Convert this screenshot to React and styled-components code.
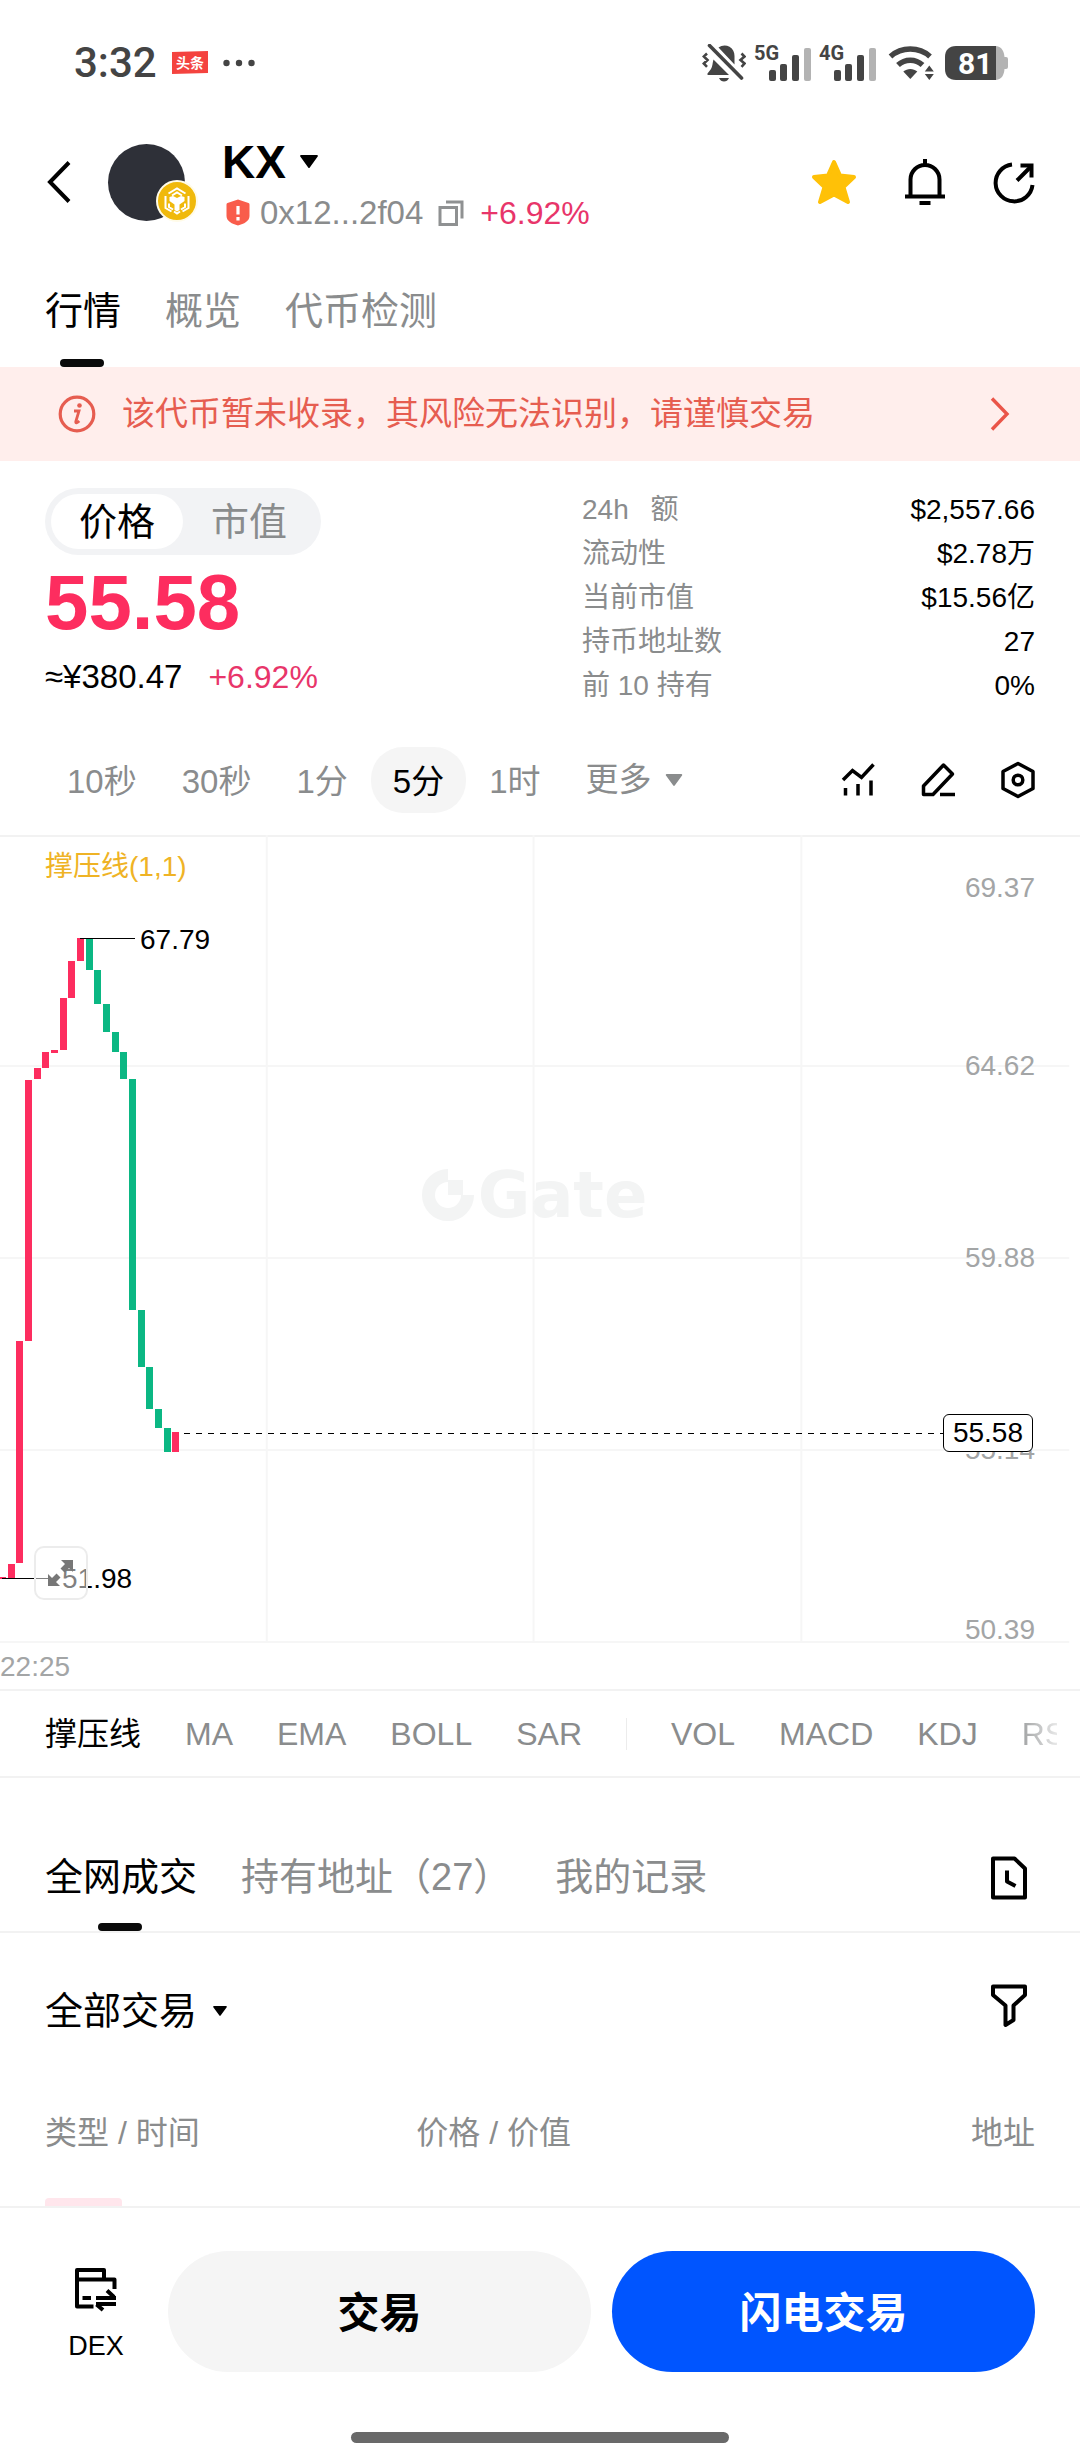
import { useState } from 'react';
import styled, { createGlobalStyle } from 'styled-components';

const RED = '#fd2d5f';
const GREEN = '#0bb783';

const timeframes = ['10秒', '30秒', '1分', '5分', '1时'];
const mainIndicators = ['撑压线', 'MA', 'EMA', 'BOLL', 'SAR'];
const subIndicators = ['VOL', 'MACD', 'KDJ', 'RSI'];

const stats = [
    { label: '24h \u2002额', value: '$2,557.66' },
    { label: '流动性', value: '$2.78万' },
    { label: '当前市值', value: '$15.56亿' },
    { label: '持币地址数', value: '27' },
    { label: '前 10 持有', value: '0%' },
];

// [top, bottom, rising], in chart pixels, oldest first
const candles = [
    [742, 744, true],
    [729, 743, true],
    [506, 728, true],
    [245, 506, true],
    [233, 244, true],
    [217, 233, true],
    [215, 218, true],
    [163, 215, true],
    [126, 163, true],
    [103, 126, true],
    [103, 135, false],
    [135, 169, false],
    [169, 197, false],
    [197, 217, false],
    [217, 244, false],
    [244, 475, false],
    [475, 532, false],
    [532, 574, false],
    [574, 593, false],
    [593, 617, false],
    [597, 617, true],
];

const priceScale = [
    { text: '69.37', y: 62 },
    { text: '64.62', y: 240 },
    { text: '59.88', y: 432 },
    { text: '55.14', y: 624 },
    { text: '50.39', y: 804 },
];

const Caret = ({ width, height, color = '#000' }) => (
    <svg width={width} height={height} viewBox="0 0 18 13" fill={color} aria-hidden="true">
        <path d="M1 0h16a1 1 0 0 1 .7 1.600L9.800 12.400a1 1 0 0 1-1.600 0L.3 1.600A1 1 0 0 1 1 0z" />
    </svg>
);

const Signal = ({ type }) => (
    <svg width="57" height="38" viewBox="0 0 57 38" fill="#444">
        <text x="0" y="16" fontFamily="Roboto" fontWeight="700" fontSize="20">{type}</text>
        <rect x="15" y="26" width="7" height="11" rx="2" />
        <rect x="26" y="20" width="7" height="17" rx="2" />
        <rect x="38" y="11" width="7" height="26" rx="2" />
        <rect x="50" y="4" width="7" height="33" rx="2" fill="#b3b3b3" />
    </svg>
);

function StatusBar() {
    return (
        <Status>
            <StatusLeft>
                <Clock>3:32</Clock>
                <svg width="36" height="26" viewBox="0 0 36 26">
                    <path d="M0 2l36-1v22L0 24z" fill="#f4433f" />
                    <text x="4" y="18" fill="#fff" fontFamily="Noto Sans CJK SC" fontWeight="700" fontSize="14">头条</text>
                </svg>
                <svg width="32" height="8" viewBox="0 0 32 8" fill="#444">
                    <circle cx="3.500" cy="4" r="3.200" />
                    <circle cx="16" cy="4" r="3.200" />
                    <circle cx="28.500" cy="4" r="3.200" />
                </svg>
            </StatusLeft>
            <StatusRight>
                <svg width="44" height="38" viewBox="0 0 44 38" fill="#444">
                    <path d="M11.500 15.500L27 31H6.500c-1 0-1.500-1-.8-1.800L9 25c1.500-2.500 1.500-6 2.500-9.500zM16.500 3.500C20 1 24 .8 27.500 2.800 31 5 32.500 8 32.500 12v8.500z" />
                    <path d="M7.500 1.500l32 32.500" stroke="#444" strokeWidth="3.600" strokeLinecap="round" />
                    <path d="M17 34h10c-1 2.500-3 3.500-5 3.500S18 36.500 17 34z" />
                    <path d="M5 9.500L1.800 12.500 5.500 16 1.800 19.500 5 22.800M39.500 9.500L42.500 12.500 38.500 16 42.500 19.500 39.500 22.800" fill="none" stroke="#444" strokeWidth="2.600" />
                </svg>
                <Signal type="5G" />
                <Signal type="4G" />
                <svg width="53" height="36" viewBox="-4 0 53 36" fill="#444">
                    <path d="M2.500 11.500C13.500 1.600 31 1.600 42 11.500" fill="none" stroke="#444" strokeWidth="5.500" />
                    <path d="M10 20c7-6.500 17.500-6.500 24.500 0" fill="none" stroke="#444" strokeWidth="5.500" />
                    <path d="M22.300 34l-7-7.500c4-3.500 10-3.500 14 0z" />
                    <path d="M41.300 20.500l4.500 6h-9zM41.300 35l4.500-6h-9z" />
                </svg>
                <svg width="64" height="34" viewBox="0 0 64 34">
                    <path d="M51 0c6 1 8 5 8.500 11H61a2 2 0 0 1 2 2v8a2 2 0 0 1-2 2h-1.500C59 29 57 33 51 34z" fill="#b3b3b3" />
                    <path d="M11 0h40v34H11C4 34 0 30 0 23V11C0 4 4 0 11 0z" fill="#444" />
                    <text x="13" y="28" fill="#fff" fontFamily="Roboto" fontWeight="700" fontSize="30">81</text>
                </svg>
            </StatusRight>
        </Status>
    );
}

function TokenHeader() {
    return (
        <Header>
            <IconButton aria-label="返回">
                <svg width="24" height="42" viewBox="0 0 24 42" fill="none" stroke="#000" strokeWidth="4">
                    <path d="M22 1.500L3 21l19 19.500" />
                </svg>
            </IconButton>
            <Avatar>
                <ChainBadge>
                    <svg width="42" height="42" viewBox="0 0 42 42" fill="none">
                        <circle cx="21" cy="21" r="20" fill="#f0b90b" stroke="#fffbe8" strokeWidth="2" />
                        <g stroke="#fff" strokeWidth="2">
                            <path d="M12.500 13.500L21 8.500l8.500 5" />
                            <path d="M16 15.500l5-3 5 3" />
                            <path d="M9.500 16v12l6 3.500M32.500 16v12l-6 3.500" />
                            <path d="M13 23.500v3.500l4 2.500M29 23.500v3.500l-4 2.500" />
                            <path d="M18 31.500l3 2 3-2" />
                            <path d="M13.500 17l3.500-1 4 2 4-2 3.500 1v4l-5 3.500V30L21 31.500 18.500 30v-5.500l-5-3.500z" fill="#fff" stroke="none" />
                        </g>
                    </svg>
                </ChainBadge>
            </Avatar>
            <TokenInfo>
                <TokenName aria-haspopup="menu">
                    KX
                    <Caret width={18} height={13} />
                </TokenName>
                <AddressLine>
                    <svg width="24" height="27" viewBox="0 0 24 27">
                        <path d="M12 .5l10.500 3.500c.6.200 1 .7 1 1.400V17c0 5-5.500 8-11.500 9.500C6 25 .5 22 .5 17V5.400c0-.7.4-1.200 1-1.400z" fill="#f95c4b" />
                        <path d="M12 7v8.500M12 18v3.500" stroke="#fff" strokeWidth="3.200" />
                    </svg>
                    <Address>0x12...2f04</Address>
                    <CopyButton aria-label="复制地址">
                        <svg width="26" height="26" viewBox="0 0 26 26" fill="none" stroke="#8f9192" strokeWidth="3">
                            <path d="M2 7.500h16.500v17H2zM8 2h16v16.500" />
                        </svg>
                    </CopyButton>
                    <Change>+6.92%</Change>
                </AddressLine>
            </TokenInfo>
            <HeaderActions>
                <IconButton aria-label="收藏">
                    <svg width="46" height="46" viewBox="0 0 46 46">
                        <path d="M23 3l6 13.500 14 1.500-10.500 10 4.500 15-14-7.500-14 7.500 4.500-15L3 18l14-1.500z" fill="#ffc107" stroke="#ffc107" strokeWidth="4" strokeLinejoin="round" />
                    </svg>
                </IconButton>
                <IconButton aria-label="价格提醒">
                    <svg width="40" height="46" viewBox="0 0 40 46" fill="none" stroke="#000" strokeWidth="4">
                        <path d="M20 0v6M5.500 37V20.500a14.500 14.500 0 0 1 29 0V37M0 37.500h40M14.500 44h11" />
                    </svg>
                </IconButton>
                <IconButton aria-label="分享">
                    <svg width="42" height="46" viewBox="0 0 42 46" fill="none" stroke="#000" strokeWidth="4">
                        <path d="M19 5.500A18.500 18.500 0 1 0 39.500 26M24 21.500L38 7.500" />
                        <path d="M27.500 6.500H38.500V18.500" />
                    </svg>
                </IconButton>
            </HeaderActions>
        </Header>
    );
}

function PriceChart() {
    return (
        <ChartBox>
            <ChartSvg>
                {['24.7%', '49.4%', '74.2%'].map(x => (
                    <line key={x} x1={x} x2={x} y1="0" y2="807" stroke="#f6f6f6" strokeWidth="2" />
                ))}
                {[231, 423, 615, 807].map(y => (
                    <line key={y} x1="0" x2="99%" y1={y} y2={y} stroke="#f6f6f6" strokeWidth="2" />
                ))}
                {candles.map(([top, bottom, up], i) => (
                    <rect
                        key={i}
                        x={Math.round(i * 8.667 - 1)}
                        y={top}
                        width="7"
                        height={bottom - top}
                        fill={up ? RED : GREEN}
                    />
                ))}
                <path d="M80 103.500h55M2 743.500h55" stroke="#000" />
                <ChartText x="140" y="114">67.79</ChartText>
                <ChartText x="62" y="753">51.98</ChartText>
                <ChartText x="45" y="41" $color="#efb325">撑压线(1,1)</ChartText>
                <svg x="100%" overflow="visible">
                    {priceScale.map(p => (
                        <ChartText key={p.text} x="-45" y={p.y} textAnchor="end" $color="#a3a5a6">{p.text}</ChartText>
                    ))}
                </svg>
            </ChartSvg>
            <Watermark>
                <svg width="54" height="52" viewBox="0 0 54 52">
                    <path d="M27 6.500A19.500 19.500 0 1 0 46.500 26" fill="none" stroke="#f3f4f4" strokeWidth="13" />
                    <path d="M27 11h15v15H27z" fill="#f3f4f4" />
                </svg>
                Gate
            </Watermark>
            <LastPrice>
                <DashedRule />
                <PriceTag>55.58</PriceTag>
            </LastPrice>
            <ExpandButton aria-label="全屏">
                <svg width="28" height="28" viewBox="0 0 28 28" fill="#777">
                    <path d="M14 1h12v12l-4-4-4.500 4.500-4-4L18 5zM1 27V15l4 4 4.500-4.500 4 4L9 23l4 4z" />
                </svg>
            </ExpandButton>
        </ChartBox>
    );
}

export default function App() {
    const [tab, setTab] = useState('行情');
    const [mode, setMode] = useState('价格');
    const [frame, setFrame] = useState('5分');
    const [indicator, setIndicator] = useState('撑压线');
    const [list, setList] = useState('全网成交');

    return (
        <Page>
            <GlobalStyle />
            <StatusBar />
            <TokenHeader />

            <Tabs>
                {['行情', '概览', '代币检测'].map(t => (
                    <Tab key={t} $active={t === tab} onClick={() => setTab(t)}>{t}</Tab>
                ))}
            </Tabs>

            <RiskBanner href="#risk">
                <svg width="38" height="38" viewBox="0 0 38 38" fill="none" stroke="#e65d50">
                    <circle cx="19" cy="19" r="16.800" strokeWidth="3.200" />
                    <path d="M16 16h5l-3.200 10.500c-.3 1.800 1 1.800 3.500-.5" strokeWidth="2.800" />
                    <circle cx="21.500" cy="10.500" r="2.300" fill="#e65d50" stroke="none" />
                </svg>
                <RiskText>该代币暂未收录，其风险无法识别，请谨慎交易</RiskText>
                <svg width="20" height="34" viewBox="0 0 20 34" fill="none" stroke="#ea5549" strokeWidth="3.400">
                    <path d="M2 1.500L17 17 2 32.500" />
                </svg>
            </RiskBanner>

            <Summary>
                <div>
                    <Toggle>
                        {['价格', '市值'].map(m => (
                            <ToggleButton key={m} $active={m === mode} onClick={() => setMode(m)}>{m}</ToggleButton>
                        ))}
                    </Toggle>
                    <Price>55.58</Price>
                    <SubPrice>
                        ≈¥380.47
                        <Change>+6.92%</Change>
                    </SubPrice>
                </div>
                <Stats>
                    {stats.map(s => (
                        <StatRow key={s.label}>
                            <dt>{s.label}</dt>
                            <dd>{s.value}</dd>
                        </StatRow>
                    ))}
                </Stats>
            </Summary>

            <Toolbar>
                {timeframes.map(f => (
                    <Frame key={f} $active={f === frame} onClick={() => setFrame(f)}>{f}</Frame>
                ))}
                <MoreFrames>
                    <PlainSelect aria-label="更多周期" $size={33} $color="#8a8c8d">
                        <option>更多</option>
                    </PlainSelect>
                    <Caret width={18} height={12} color="#8a8c8d" />
                </MoreFrames>
                <ToolIcons>
                    <IconButton aria-label="指标">
                        <svg width="34" height="36" viewBox="0 0 34 36" fill="none" stroke="#000" strokeWidth="3.500">
                            <path d="M2 18l9.500-9.500 9 7L32.500 2.500M4.500 26v7.500M17 22v11.500M30 18.500v15" />
                        </svg>
                    </IconButton>
                    <IconButton aria-label="画线">
                        <svg width="34" height="36" viewBox="0 0 34 36" fill="none" stroke="#000" strokeWidth="3.500" strokeLinejoin="round">
                            <path d="M2.500 32.500V24L22.500 3l9 9-19.500 20.500zM19 32.500h15" />
                        </svg>
                    </IconButton>
                    <IconButton aria-label="设置">
                        <svg width="34" height="38" viewBox="0 0 34 38" fill="none" stroke="#000" strokeWidth="3.500" strokeLinejoin="round">
                            <path d="M17 2.500l15 8v17l-15 8-15-8v-17z" />
                            <circle cx="17" cy="19" r="4.800" />
                        </svg>
                    </IconButton>
                </ToolIcons>
            </Toolbar>

            <PriceChart />
            <TimeAxis>22:25</TimeAxis>

            <Indicators>
                {mainIndicators.map(n => (
                    <Indicator key={n} $active={n === indicator} onClick={() => setIndicator(n)}>{n}</Indicator>
                ))}
                <Divider />
                {subIndicators.map(n => (
                    <Indicator key={n}>{n}</Indicator>
                ))}
            </Indicators>

            <ListTabs>
                {['全网成交', '持有地址（27）', '我的记录'].map(t => (
                    <Tab key={t} $active={t === list} onClick={() => setList(t)}>{t}</Tab>
                ))}
                <TabIcon aria-label="历史记录">
                    <svg width="38" height="44" viewBox="0 0 38 44" fill="none" stroke="#000" strokeWidth="4" strokeLinejoin="round">
                        <path d="M3 2.500h21.500L35 12.500v29H3z" />
                        <path d="M17 14.500v11l8.500 4.500" />
                    </svg>
                </TabIcon>
            </ListTabs>

            <FilterRow>
                <FilterLabel>
                    <PlainSelect aria-label="交易类型" $size={38} $color="#000">
                        <option>全部交易</option>
                    </PlainSelect>
                    <Caret width={14} height={10} />
                </FilterLabel>
                <RightIcon aria-label="筛选">
                    <svg width="38" height="44" viewBox="0 0 38 44" fill="none" stroke="#000" strokeWidth="4" strokeLinejoin="round">
                        <path d="M3 2.500h32v8.500L23.500 21.500V36L15.500 41V21.500L3 11z" />
                    </svg>
                </RightIcon>
            </FilterRow>

            <TradesClip>
                <Trades>
                    <thead>
                        <tr>
                            <Th $width="37.5%">类型 / 时间</Th>
                            <Th>价格 / 价值</Th>
                            <Th $align="right">地址</Th>
                        </tr>
                    </thead>
                    <tbody>
                        <tr>
                            <Td><TypeTag /></Td>
                            <Td />
                            <Td />
                        </tr>
                    </tbody>
                </Trades>
            </TradesClip>

            <BottomBar>
                <DexLink href="#dex">
                    <svg width="42" height="44" viewBox="0 0 42 44" fill="none" stroke="#000" strokeWidth="4" strokeLinejoin="round">
                        <path d="M18.500 38.500H2V2h27v9.500M2 11.500h37.500v9.500M7.500 30H16" />
                        <path d="M21 30h20M32 22.500l7 6.500M41 36H21M21.500 36.500l6.500 5.500" />
                    </svg>
                    DEX
                </DexLink>
                <ActionButton>交易</ActionButton>
                <ActionButton $primary>闪电交易</ActionButton>
            </BottomBar>
            <HomeBar />
        </Page>
    );
}

const GlobalStyle = createGlobalStyle`
    * {
        box-sizing: border-box;
    }
    body {
        margin: 0;
        background: #fff;
    }
    button, select {
        margin: 0;
        padding: 0;
        border: 0;
        background: none;
        font: inherit;
        color: inherit;
        cursor: pointer;
    }
    svg {
        display: block;
        flex-shrink: 0;
    }
`;

const Page = styled.div`
    font-family: 'Liberation Sans', 'Noto Sans CJK SC', sans-serif;
    color: #000;
    background: #fff;
    overflow: hidden;
`;

const Status = styled.div`
    display: flex;
    justify-content: space-between;
    align-items: center;
    height: 126px;
    padding: 0 71px 0 74px;
`;

const StatusLeft = styled.div`
    display: flex;
    align-items: center;
    gap: 15px;
`;

const Clock = styled.span`
    font-family: Roboto, sans-serif;
    font-size: 42px;
    font-weight: 500;
    line-height: 50px;
    color: #444;
`;

const StatusRight = styled.div`
    display: flex;
    align-items: center;
    gap: 8px;
`;

const Header = styled.header`
    display: flex;
    align-items: center;
    height: 112px;
    padding: 0 45px 0 47px;
`;

const IconButton = styled.button`
    display: flex;
    align-items: center;
    justify-content: center;
`;

const Avatar = styled.div`
    position: relative;
    width: 77px;
    height: 77px;
    margin-left: 37px;
    border-radius: 50%;
    background: #2e3038;
`;

const ChainBadge = styled.span`
    position: absolute;
    right: -13px;
    bottom: -1px;
`;

const TokenInfo = styled.div`
    padding-top: 9px;
    margin-left: 37px;
`;

const TokenName = styled.button`
    display: flex;
    align-items: center;
    gap: 14px;
    font-size: 46px;
    font-weight: 700;
    line-height: 52px;
`;

const AddressLine = styled.div`
    display: flex;
    align-items: center;
    font-size: 33px;
    line-height: 50px;
    margin-left: 4px;
`;

const Address = styled.span`
    margin-left: 10px;
    color: #8a8c8d;
`;

const CopyButton = styled.button`
    margin: 0 16px 0 15px;
`;

const Change = styled.span`
    font-size: 32px;
    color: #e8356a;
`;

const HeaderActions = styled.div`
    display: flex;
    align-items: center;
    gap: 48px;
    margin-left: auto;
`;

const Tabs = styled.nav`
    display: flex;
    align-items: stretch;
    gap: 44px;
    height: 129px;
    padding: 0 45px;
`;

const ListTabs = styled(Tabs)`
    height: 155px;
    padding-top: 28px;
    border-bottom: 2px solid #f2f2f2;
`;

const Tab = styled.button`
    position: relative;
    padding-top: 16px;
    font-size: 38px;
    line-height: 50px;
    white-space: nowrap;
    color: ${p => (p.$active ? '#000' : '#8a8c8d')};

    &::after {
        content: '';
        display: ${p => (p.$active ? 'block' : 'none')};
        position: absolute;
        bottom: 0;
        left: calc(50% - 23px);
        width: 44px;
        height: 8px;
        border-radius: 4px;
        background: #0a0a0a;
    }
`;

const RiskBanner = styled.a`
    display: flex;
    align-items: center;
    height: 94px;
    padding: 0 70px 0 58px;
    background: #ffeeec;
    color: #e65d50;
    text-decoration: none;
`;

const RiskText = styled.span`
    flex: 1;
    margin-left: 26px;
    font-size: 33px;
    line-height: 50px;
`;

const Summary = styled.section`
    display: grid;
    grid-template-columns: 537fr 453fr;
    padding: 27px 45px 0;
`;

const Toggle = styled.div`
    display: inline-flex;
    height: 67px;
    padding: 6px;
    border-radius: 34px;
    background: #f2f3f5;
    vertical-align: top;
`;

const ToggleButton = styled.button`
    padding: 0 28px;
    border-radius: 28px;
    font-size: 38px;
    line-height: 54px;
    background: ${p => (p.$active ? '#fff' : 'transparent')};
    color: ${p => (p.$active ? '#000' : '#8a8c8d')};
`;

const Price = styled.div`
    font-size: 78px;
    font-weight: 700;
    line-height: 94px;
    color: ${RED};
`;

const SubPrice = styled.div`
    display: flex;
    gap: 26px;
    font-size: 33px;
    line-height: 56px;
`;

const Stats = styled.dl`
    margin: 0;
    font-size: 28px;
    line-height: 44px;
`;

const StatRow = styled.div`
    display: flex;
    justify-content: space-between;

    dt {
        color: #8a8c8d;
    }
    dd {
        margin: 0;
    }
`;

const Toolbar = styled.div`
    display: flex;
    align-items: center;
    gap: 1px;
    padding: 39px 45px 22px;
`;

const Frame = styled.button`
    height: 66px;
    padding: 0 22px 3px;
    border-radius: 32px;
    font-size: 33px;
    white-space: nowrap;
    background: ${p => (p.$active ? '#f5f5f5' : 'transparent')};
    color: ${p => (p.$active ? '#000' : '#8a8c8d')};
`;

const MoreFrames = styled.label`
    display: flex;
    align-items: center;
    gap: 13px;
    padding-left: 22px;
`;

const PlainSelect = styled.select`
    appearance: none;
    font-size: ${p => p.$size}px;
    line-height: 50px;
    color: ${p => p.$color};
`;

const ToolIcons = styled.div`
    display: flex;
    align-items: center;
    gap: 46px;
    margin-left: auto;
`;

const ChartBox = styled.section`
    position: relative;
    height: 808px;
    border-top: 2px solid #f2f2f2;
`;

const ChartSvg = styled.svg`
    width: 100%;
    height: 808px;
    margin-top: -2px;
`;

const ChartText = styled.text`
    font-size: 28px;
    fill: ${p => p.$color || '#000'};
`;

const Watermark = styled.div`
    position: absolute;
    top: 318px;
    left: 0;
    right: 12px;
    display: flex;
    align-items: center;
    justify-content: center;
    gap: 3px;
    font-family: 'DejaVu Sans', sans-serif;
    font-size: 64px;
    font-weight: 700;
    line-height: 80px;
    color: #f3f4f4;
`;

const LastPrice = styled.div`
    position: absolute;
    top: 577px;
    left: 184px;
    right: 47px;
    display: flex;
    align-items: center;
`;

const DashedRule = styled.span`
    flex: 1;
    height: 1px;
    background: repeating-linear-gradient(90deg, #000 0 6px, transparent 6px 12px);
`;

const PriceTag = styled.span`
    padding: 0 9px;
    border: 1px solid #000;
    border-radius: 6px;
    background: #fff;
    font-size: 28px;
    line-height: 36px;
`;

const ExpandButton = styled.button`
    position: absolute;
    left: 34px;
    top: 709px;
    display: flex;
    align-items: center;
    justify-content: center;
    width: 54px;
    height: 54px;
    border: 2px solid #ececec;
    border-radius: 10px;
    background: rgba(255, 255, 255, 0.5);
`;

const TimeAxis = styled.div`
    padding-top: 2px;
    font-size: 28px;
    line-height: 44px;
    color: #a3a5a6;
`;

const Indicators = styled.div`
    display: flex;
    align-items: center;
    gap: 44px;
    height: 89px;
    padding-left: 45px;
    overflow: hidden;
    border-top: 2px solid #f2f2f2;
    border-bottom: 2px solid #f2f2f2;

    & > :last-child {
        width: 35px;
        overflow: hidden;
        mask-image: linear-gradient(90deg, rgba(0, 0, 0, 0.8), rgba(0, 0, 0, 0.2));
    }
`;

const Indicator = styled.button`
    flex-shrink: 0;
    font-size: 32px;
    line-height: 50px;
    color: ${p => (p.$active ? '#000' : '#8a8c8d')};
`;

const Divider = styled.span`
    width: 1px;
    height: 32px;
    background: #ececec;
`;

const RightIcon = styled(IconButton)`
    margin-left: auto;
    margin-right: 7px;
    align-self: flex-start;
    height: 50px;
`;

const TabIcon = styled(RightIcon)`
    align-self: stretch;
    height: auto;
    padding-top: 18px;
`;

const FilterRow = styled.div`
    display: flex;
    align-items: center;
    padding: 48px 45px 0;
`;

const FilterLabel = styled.label`
    display: flex;
    align-items: center;
    gap: 15px;
    padding-top: 5px;
`;

const TradesClip = styled.div`
    height: 172px;
    padding: 72px 45px 0;
    overflow: hidden;
    border-bottom: 2px solid #f2f2f2;
`;

const Trades = styled.table`
    width: 100%;
    border-collapse: collapse;
`;

const Th = styled.th`
    width: ${p => p.$width || 'auto'};
    padding: 0;
    font-size: 32px;
    font-weight: 400;
    line-height: 50px;
    text-align: ${p => p.$align || 'left'};
    color: #8a8c8d;
`;

const Td = styled.td`
    padding: 40px 0 0;
`;

const TypeTag = styled.span`
    display: block;
    width: 77px;
    height: 44px;
    border-radius: 4px;
    background: #ffe6ec;
`;

const BottomBar = styled.footer`
    display: flex;
    align-items: center;
    gap: 21px;
    padding: 43px 45px 0;
`;

const DexLink = styled.a`
    display: flex;
    flex-direction: column;
    align-items: center;
    gap: 16px;
    width: 102px;
    padding-top: 8px;
    font-size: 27px;
    line-height: 36px;
    color: #000;
    text-decoration: none;
`;

const ActionButton = styled.button`
    flex: 1;
    height: 121px;
    padding-bottom: 4px;
    border-radius: 61px;
    font-size: 42px;
    font-weight: 700;
    background: ${p => (p.$primary ? '#0055ff' : '#f5f5f5')};
    color: ${p => (p.$primary ? '#fff' : '#000')};
`;

const HomeBar = styled.div`
    width: 35%;
    height: 11px;
    margin: 60px auto 17px;
    border-radius: 6px;
    background: #696969;
`;
